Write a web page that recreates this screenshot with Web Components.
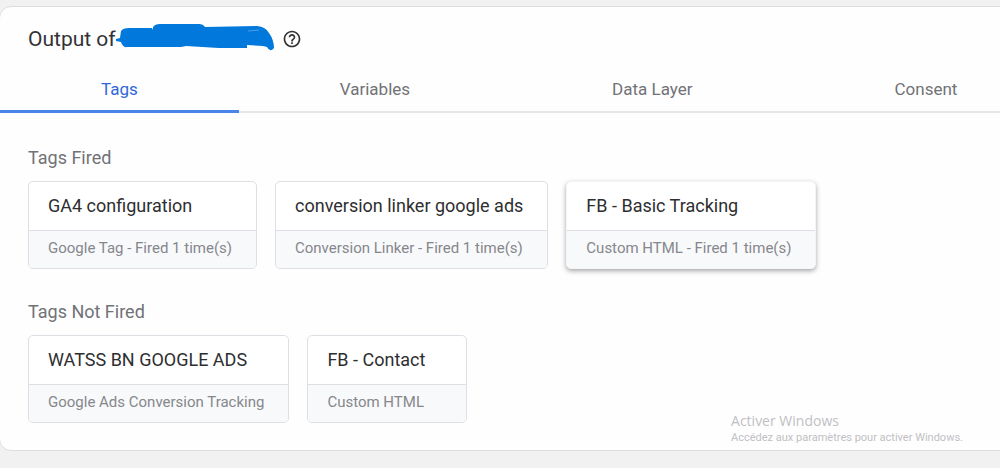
<!DOCTYPE html>
<html lang="en">
<head>
<meta charset="utf-8">
<meta name="viewport" content="width=device-width, initial-scale=1">
<title>Tag output</title>
<style>
  body { margin: 0; background: #f1f1f2; overflow-x: hidden; }
</style>
</head>
<body>
<output-page></output-page>
<script>
const define = (name, html, setup) => customElements.define(name, class extends HTMLElement {
  constructor() {
    super();
    const t = document.createElement('template');
    t.innerHTML = html;
    this.attachShadow({ mode: 'open' }).append(t.content.cloneNode(true));
  }
  connectedCallback() { if (setup) setup(this, this.shadowRoot); }
});

define('redacted-name', `
  <style>
    :host { display: block; width: 160px; height: 32px; }
    svg { display: block; }
  </style>
  <svg width="160" height="32" viewBox="0 0 160 32" role="img" aria-label="Hidden name">
    <path fill="#0078dc" d="M0 16L4 15L5 8Q7 5 13 5L36 5L37 7L37 4Q39 1 44 1H83Q87 1 89 4L141 3Q150 4 153 10Q158 17 158 25Q154 30 151 24L147 23L131 22V25L103 25L70 23L65 24H11Q7 25 5 19L0 18Z"/>
    <path d="M132 8L143 7" stroke="#4a9fe6" fill="none"/>
  </svg>`);

define('help-button', `
  <style>
    :host { display: block; }
    button { display: block; padding: 0; border: 0; background: none; color: #333; cursor: pointer; }
    svg { display: block; }
  </style>
  <button type="button" aria-label="Help">
    <svg width="20" height="20" viewBox="0 0 24 24" fill="currentColor"><path d="M11 18h2v-2h-2v2zm1-16C6.480 2 2 6.480 2 12s4.480 10 10 10 10-4.480 10-10S17.520 2 12 2zm0 18c-4.410 0-8-3.590-8-8s3.590-8 8-8 8 3.590 8 8-3.590 8-8 8zm0-14c-2.210 0-4 1.790-4 4h2c0-1.100.9-2 2-2s2 .9 2 2c0 2-3 1.750-3 5h2c0-2.250 3-2.500 3-5 0-2.210-1.790-4-4-4z"/></svg>
  </button>`);

define('tab-item', `
  <style>
    :host { display: block; flex: none; }
    button {
      display: block; padding: 0 101px 1px; border: 0; border-bottom: 3px solid transparent;
      background: none; color: #717276; font: 400 17px/40px "Google Sans", Roboto, sans-serif;
      white-space: nowrap; cursor: pointer;
    }
    :host([selected]) button { color: #3068d8; border-color: #4a84ea; }
  </style>
  <button type="button" role="tab"><slot></slot></button>`,
  (host, root) => root.querySelector('button').setAttribute('aria-selected', host.hasAttribute('selected')));

define('tab-strip', `
  <style>
    :host { display: flex; overflow: hidden; box-shadow: inset 0 -2px #e6e6e8; }
  </style>
  <slot></slot>`, host => host.setAttribute('role', 'tablist'));

define('tag-card', `
  <style>
    :host { display: block; }
    button {
      display: block; min-width: 160px; padding: 0; border: 1px solid #dedee4; border-radius: 5px; overflow: hidden;
      background: #fff; text-align: left; font-family: Roboto, sans-serif; white-space: nowrap; cursor: pointer;
    }
    .name, .type { display: block; padding: 0 24px 0 19px; }
    .name { color: #2e2e30; font-size: 18px; line-height: 48px; border-bottom: 1px solid #dedee4; }
    .type { color: #86878b; background: #f8f9fb; font-size: 15px; line-height: 35px; padding-bottom: 2px; }
    :host([raised]) button { border-color: #f4f4f6; box-shadow: 0 2px 5px rgba(0,0,0,.35); }
  </style>
  <button type="button"><span class="name"><slot></slot></span><span class="type"><slot name="type"></slot></span></button>`);

define('tag-group', `
  <style>
    :host { display: block; }
    h2 { margin: 0 0 11px; color: #717276; font: 400 18px/24px "Google Sans", Roboto, sans-serif; }
    div { display: flex; flex-wrap: wrap; gap: 18px; }
  </style>
  <h2></h2><div><slot></slot></div>`,
  (host, root) => root.querySelector('h2').textContent = host.getAttribute('heading'));

define('activation-notice', `
  <style>
    :host { position: absolute; right: 37px; bottom: 22px; color: #c0c0c4; font-family: "Open Sans", sans-serif; pointer-events: none; }
    p { margin: 0; font-size: 14px; line-height: 18px; }
    p + p { font-family: Roboto, sans-serif; font-size: 11px; line-height: 16px; }
  </style>
  <p>Activer Windows</p><p>Accédez aux paramètres pour activer Windows.</p>`);

define('output-page', `
  <style>
    :host { display: block; position: relative; padding: 6px 0 17px; }
    main { margin: 0 -12px 0 -1px; border: 1px solid #dddde0; border-radius: 12px; background: #fefefe; }
    header { display: flex; align-items: center; padding: 15px 28px 13px; }
    h1 { margin: 0; color: #333335; font: 400 21px/34px "Google Sans", Roboto, sans-serif; }
    help-button { margin-left: 6px; }
    .groups { display: grid; gap: 31px; padding: 33px 40px 27px 28px; }
  </style>
  <main>
    <header><h1>Output of</h1><redacted-name></redacted-name><help-button></help-button></header>
    <tab-strip>
      <tab-item selected>Tags</tab-item><tab-item>Variables</tab-item><tab-item>Data Layer</tab-item><tab-item>Consent</tab-item>
    </tab-strip>
    <div class="groups">
      <tag-group heading="Tags Fired">
        <tag-card>GA4 configuration<span slot="type">Google Tag - Fired 1 time(s)</span></tag-card>
        <tag-card>conversion linker google ads<span slot="type">Conversion Linker - Fired 1 time(s)</span></tag-card>
        <tag-card raised>FB - Basic Tracking<span slot="type">Custom HTML - Fired 1 time(s)</span></tag-card>
      </tag-group>
      <tag-group heading="Tags Not Fired">
        <tag-card>WATSS BN GOOGLE ADS<span slot="type">Google Ads Conversion Tracking</span></tag-card>
        <tag-card>FB - Contact<span slot="type">Custom HTML</span></tag-card>
      </tag-group>
    </div>
  </main>
  <activation-notice></activation-notice>`);
</script>
</body>
</html>
